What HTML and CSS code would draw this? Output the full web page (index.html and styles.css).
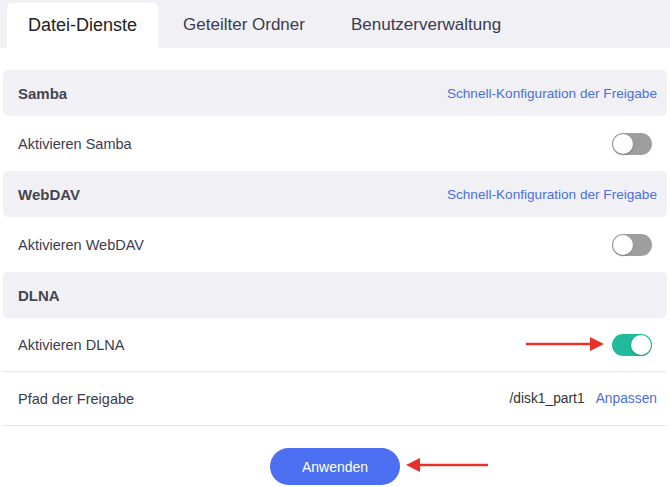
FILE: index.html
```html
<!DOCTYPE html>
<html lang="de">
<head>
<meta charset="utf-8">
<link rel="stylesheet" href="styles.css">
</head>
<body>
<div class="page">
  <div class="tabs">
    <div class="tab active">Datei-Dienste</div>
    <div class="tab">Geteilter Ordner</div>
    <div class="tab">Benutzerverwaltung</div>
  </div>
  <div class="content">
    <div class="head"><span class="title">Samba</span><span class="link">Schnell-Konfiguration der Freigabe</span></div>
    <div class="row"><span class="label">Aktivieren Samba</span><span class="toggle"></span></div>
    <div class="head"><span class="title">WebDAV</span><span class="link">Schnell-Konfiguration der Freigabe</span></div>
    <div class="row"><span class="label">Aktivieren WebDAV</span><span class="toggle"></span></div>
    <div class="head"><span class="title">DLNA</span></div>
    <div class="row bordered"><span class="label">Aktivieren DLNA</span><span class="toggle on"></span></div>
    <div class="row bordered path"><span class="label">Pfad der Freigabe</span><span class="value">/disk1_part1<span class="link small">Anpassen</span></span></div>
    <div class="actions"><button class="apply">Anwenden</button></div>
  </div>
  <svg class="arrow arrow-toggle" width="80" height="16" viewBox="0 0 80 16"><line x1="0" y1="8" x2="66" y2="8" stroke="#e8302a" stroke-width="2.5"/><polygon points="64,1 78,8 64,15" fill="#e8302a"/></svg>
  <svg class="arrow arrow-button" width="84" height="16" viewBox="0 0 84 16"><line x1="14" y1="8" x2="84" y2="8" stroke="#e8302a" stroke-width="2.5"/><polygon points="16,1 2,8 16,15" fill="#e8302a"/></svg>
</div>
</body>
</html>
```
FILE: styles.css
```css
* { box-sizing: border-box; }
html, body { margin: 0; padding: 0; background: #fff; }
body { font-family: "Liberation Sans", Arial, sans-serif; color: #3b3b4d; }
.page { position: relative; width: 670px; height: 487px; overflow: hidden; }
.tabs { display: flex; align-items: flex-end; height: 48px; background: #f1f1f5; padding-left: 7px; }
.tab { height: 45px; display: flex; align-items: center; padding: 0 23px 1px; font-size: 17px; color: #3a3a52; }
.tab.active { background: #fff; border-radius: 5px 5px 0 0; color: #222; font-size: 18px; padding: 0 21px 1px 21px; margin-right: 2px; }
.content { padding: 22px 3px 0 3px; }
.head { height: 46px; background: #f1f1f5; border-radius: 5px; display: flex; align-items: center; justify-content: space-between; padding: 0 10px 0 15px; }
.title { font-weight: bold; font-size: 15px; color: #454550; }
.link { color: #4a6ee0; font-size: 13.6px; }
.row { height: 55px; display: flex; align-items: center; justify-content: space-between; padding: 0 15px; }
.row.bordered { height: 54px; border-bottom: 1px solid #e6e6ea; }
.row.path { padding-right: 10px; }
.label { font-size: 14.5px; color: #3b3b4d; }
.value { font-size: 13.8px; color: #333; display: flex; align-items: center; }
.link.small { margin-left: 11px; font-size: 13.8px; }
.toggle { position: relative; width: 40px; height: 22px; border-radius: 11px; background: #9e9e9e; }
.toggle::after { content: ""; position: absolute; top: 1px; left: 1px; width: 20px; height: 20px; border-radius: 50%; background: #fff; box-shadow: 0 1px 2px rgba(0,0,0,0.25); }
.toggle.on { background: #1fbb9b; }
.toggle.on::after { left: 19px; }
.actions { display: flex; justify-content: center; padding-top: 22px; }
.apply { width: 130px; height: 37px; border: none; border-radius: 19px; background: #4b6ff0; color: #fff; font-family: "Liberation Sans", Arial, sans-serif; font-size: 14px; }
.arrow { position: absolute; }
.arrow-toggle { left: 526px; top: 336px; }
.arrow-button { left: 404px; top: 457px; }
```
